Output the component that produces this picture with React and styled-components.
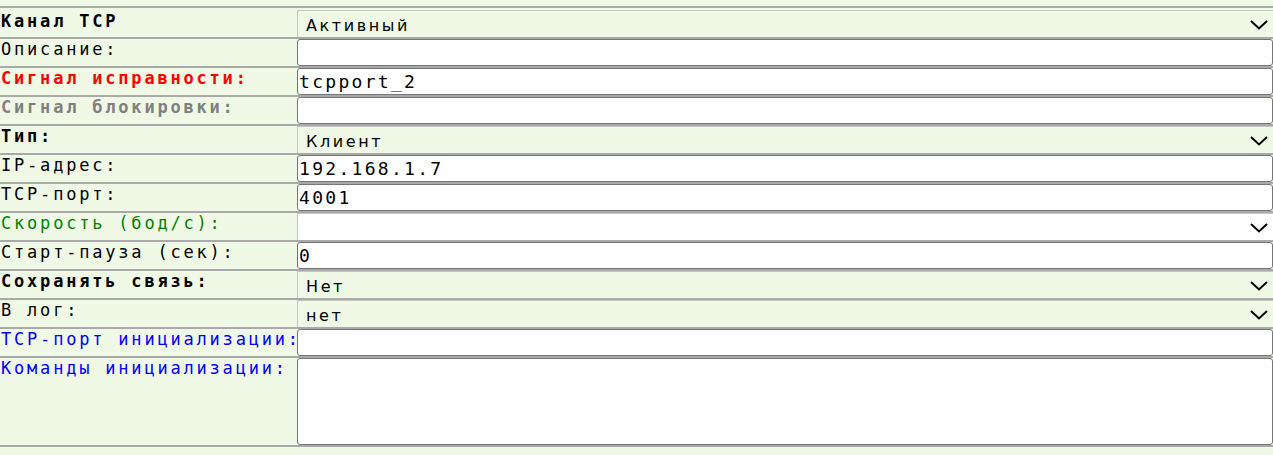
import React from 'react';
import styled, { createGlobalStyle } from 'styled-components';

const GlobalStyle = createGlobalStyle`
    html, body {
        margin: 0;
        padding: 0;
        background: #f0f8e6;
    }
    body {
        font-family: "DejaVu Sans Mono", monospace;
    }
`;

const Sheet = styled.table`
    width: 100%;
    margin-top: 6px;
    border-collapse: collapse;
    table-layout: fixed;
`;

const LabelCell = styled.td`
    width: 297px;
    padding: ${p => (p.$first ? '4px' : '1px')} 0 0 1px;
    vertical-align: top;
    border-top: 2px solid #a9a9a9;
    border-bottom: 2px solid #a9a9a9;
    font-family: "DejaVu Sans Mono", monospace;
    font-size: 17px;
    line-height: 19px;
    font-weight: ${p => (p.$bold ? 'bold' : 'normal')};
    letter-spacing: 2.8px;
    white-space: nowrap;
    color: ${p => p.$color || '#000'};
`;

const ValueCell = styled.td`
    padding: 0;
    vertical-align: top;
    border-top: 2px solid #a9a9a9;
    border-bottom: 2px solid #a9a9a9;
`;

const TextInput = styled.input`
    display: block;
    width: 100%;
    height: 27px;
    margin: 0;
    padding: 0 1px;
    box-sizing: border-box;
    border: 1px solid #767676;
    border-radius: 3px;
    background: #fff;
    color: #000;
    font-family: "DejaVu Sans Mono", monospace;
    font-size: 18px;
    letter-spacing: 2.3px;
    outline: none;
`;

const TextArea = styled.textarea`
    display: block;
    width: 100%;
    height: 87px;
    margin: 0;
    padding: 1px;
    box-sizing: border-box;
    border: 1px solid #767676;
    border-radius: 3px;
    background: #fff;
    resize: none;
    font-family: "DejaVu Sans Mono", monospace;
    font-size: 18px;
    outline: none;
`;

const SelectBox = styled.div`
    display: flex;
    align-items: center;
    justify-content: space-between;
    height: 27px;
    margin-top: ${p => (p.$first ? '2px' : '0')};
    padding: 3px 5px 0 8px;
    box-sizing: border-box;
    border-top: 1px solid #c6c6c6;
    border-left: 1px solid #c6c6c6;
    background: ${p => (p.$white ? '#fff' : 'transparent')};
    color: #000;
    font-family: "DejaVu Sans", sans-serif;
    font-size: 16px;
    letter-spacing: 2.6px;
    white-space: nowrap;
`;

const Chevron = styled.svg`
    flex: none;
    margin-top: -2px;
`;

const rows = [
    { label: 'Канал TCP', bold: true, kind: 'select', value: 'Активный', first: true },
    { label: 'Описание:', kind: 'input', value: '' },
    { label: 'Сигнал исправности:', bold: true, color: '#ff0000', kind: 'input', value: 'tcpport_2' },
    { label: 'Сигнал блокировки:', bold: true, color: '#808080', kind: 'input', value: '' },
    { label: 'Тип:', bold: true, kind: 'select', value: 'Клиент' },
    { label: 'IP-адрес:', kind: 'input', value: '192.168.1.7' },
    { label: 'TCP-порт:', kind: 'input', value: '4001' },
    { label: 'Скорость (бод/с):', color: '#008000', kind: 'select', value: '', white: true },
    { label: 'Старт-пауза (сек):', kind: 'input', value: '0' },
    { label: 'Сохранять связь:', bold: true, kind: 'select', value: 'Нет' },
    { label: 'В лог:', kind: 'select', value: 'нет' },
    { label: 'TCP-порт инициализации:', color: '#0000ff', kind: 'input', value: '' },
    { label: 'Команды инициализации:', color: '#0000ff', kind: 'area' },
];

function Field({ row }) {
    if (row.kind === 'select') {
        return (
            <SelectBox $first={row.first} $white={row.white}>
                <span>{row.value}</span>
                <Chevron width="18" height="10" viewBox="0 0 18 10">
                    <path d="M1 1 L9 8.5 L17 1" fill="none" stroke="#000" strokeWidth="2" />
                </Chevron>
            </SelectBox>
        );
    }
    if (row.kind === 'area') {
        return <TextArea defaultValue="" />;
    }
    return <TextInput type="text" defaultValue={row.value} />;
}

export default function App() {
    return (
        <>
            <GlobalStyle />
            <Sheet>
                <colgroup>
                    <col style={{ width: 297 }} />
                    <col />
                </colgroup>
                <tbody>
                    {rows.map(row => (
                        <tr key={row.label}>
                            <LabelCell $first={row.first} $bold={row.bold} $color={row.color}>
                                {row.label}
                            </LabelCell>
                            <ValueCell>
                                <Field row={row} />
                            </ValueCell>
                        </tr>
                    ))}
                </tbody>
            </Sheet>
        </>
    );
}
